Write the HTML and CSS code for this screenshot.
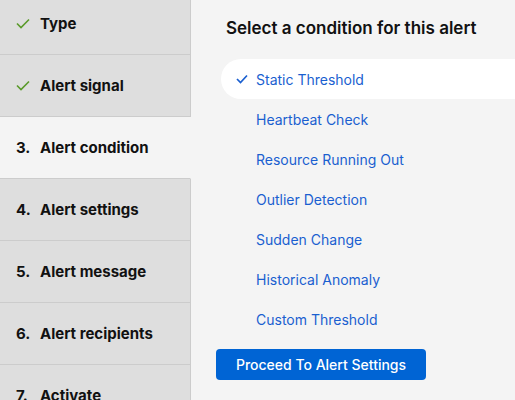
FILE: index.html
```html
<!DOCTYPE html>
<html lang="en">
<head>
    <meta charset="UTF-8">
    <meta name="viewport" content="width=device-width, initial-scale=1.0">
    <title>Create alert</title>
    <link rel="stylesheet" href="styles.css">
</head>
<body>

<div class="wizard">
    <ul class="steps">
        <li class="step done"><span class="mark"><svg width="14" height="11" viewBox="0 0 14 11"><path d="M1 5.5 L5 9.5 L13 1.5" fill="none" stroke="#5a9a2a" stroke-width="1.6"/></svg></span>Type</li>
        <li class="step done"><span class="mark"><svg width="14" height="11" viewBox="0 0 14 11"><path d="M1 5.5 L5 9.5 L13 1.5" fill="none" stroke="#5a9a2a" stroke-width="1.6"/></svg></span>Alert signal</li>
        <li class="step active"><span class="mark">3.</span>Alert condition</li>
        <li class="step"><span class="mark">4.</span>Alert settings</li>
        <li class="step"><span class="mark">5.</span>Alert message</li>
        <li class="step"><span class="mark">6.</span>Alert recipients</li>
        <li class="step"><span class="mark">7.</span>Activate</li>
    </ul>

    <div class="panel">
        <h2>Select a condition for this alert</h2>
        <ul class="options">
            <li class="option selected"><svg class="tick" width="12" height="10" viewBox="0 0 12 10"><path d="M1 5 L4.5 8.5 L11 1.5" fill="none" stroke="#1a5fd0" stroke-width="1.7"/></svg>Static Threshold</li>
            <li class="option">Heartbeat Check</li>
            <li class="option">Resource Running Out</li>
            <li class="option">Outlier Detection</li>
            <li class="option">Sudden Change</li>
            <li class="option">Historical Anomaly</li>
            <li class="option">Custom Threshold</li>
        </ul>
        <button type="button" class="proceed">Proceed To Alert Settings</button>
    </div>
</div>

</body>
</html>
```

FILE: styles.css
```css
body {
    font-family: Inter, "Open Sans", sans-serif;
    background-color: #f4f4f4;
    margin: 0;
    padding: 0;
    overflow: hidden;
}
.wizard {
    display: flex;
    height: 400px;
    overflow: hidden;
}
.steps {
    list-style: none;
    margin: -7px 0 0 0;
    padding: 0;
    width: 191px;
    flex-shrink: 0;
}
.step {
    display: flex;
    align-items: center;
    height: 61px;
    padding-left: 16px;
    background-color: #dedede;
    border-bottom: 1px solid #cccccc;
    border-right: 1px solid #cccccc;
    font-size: 15px;
    font-weight: 700;
    color: #111;
    box-sizing: content-box;
}
.step.active {
    background-color: #f4f4f4;
    border-right-color: #f4f4f4;
}
.mark {
    width: 24px;
    display: inline-flex;
    align-items: center;
}
.panel {
    flex: 1;
    padding: 18px 0 0 25px;
}
.panel h2 {
    margin: 0 0 0 10px;
    font-size: 17px;
    font-weight: 600;
    color: #111;
}
.options {
    list-style: none;
    margin: 21px 0 0 5px;
    padding: 0;
}
.option {
    position: relative;
    height: 40px;
    display: flex;
    align-items: center;
    padding-left: 35px;
    font-size: 14px;
    color: #1a5fd0;
}
.option.selected {
    background-color: #fff;
    border-radius: 20px 0 0 20px;
}
.tick {
    position: absolute;
    left: 15px;
    top: 15px;
}
.proceed {
    margin-top: 10px;
    width: 210px;
    height: 31px;
    border: none;
    border-radius: 4px;
    background-color: #0064d4;
    color: #fff;
    font-family: inherit;
    font-size: 14px;
    font-weight: 500;
    cursor: pointer;
}
```
